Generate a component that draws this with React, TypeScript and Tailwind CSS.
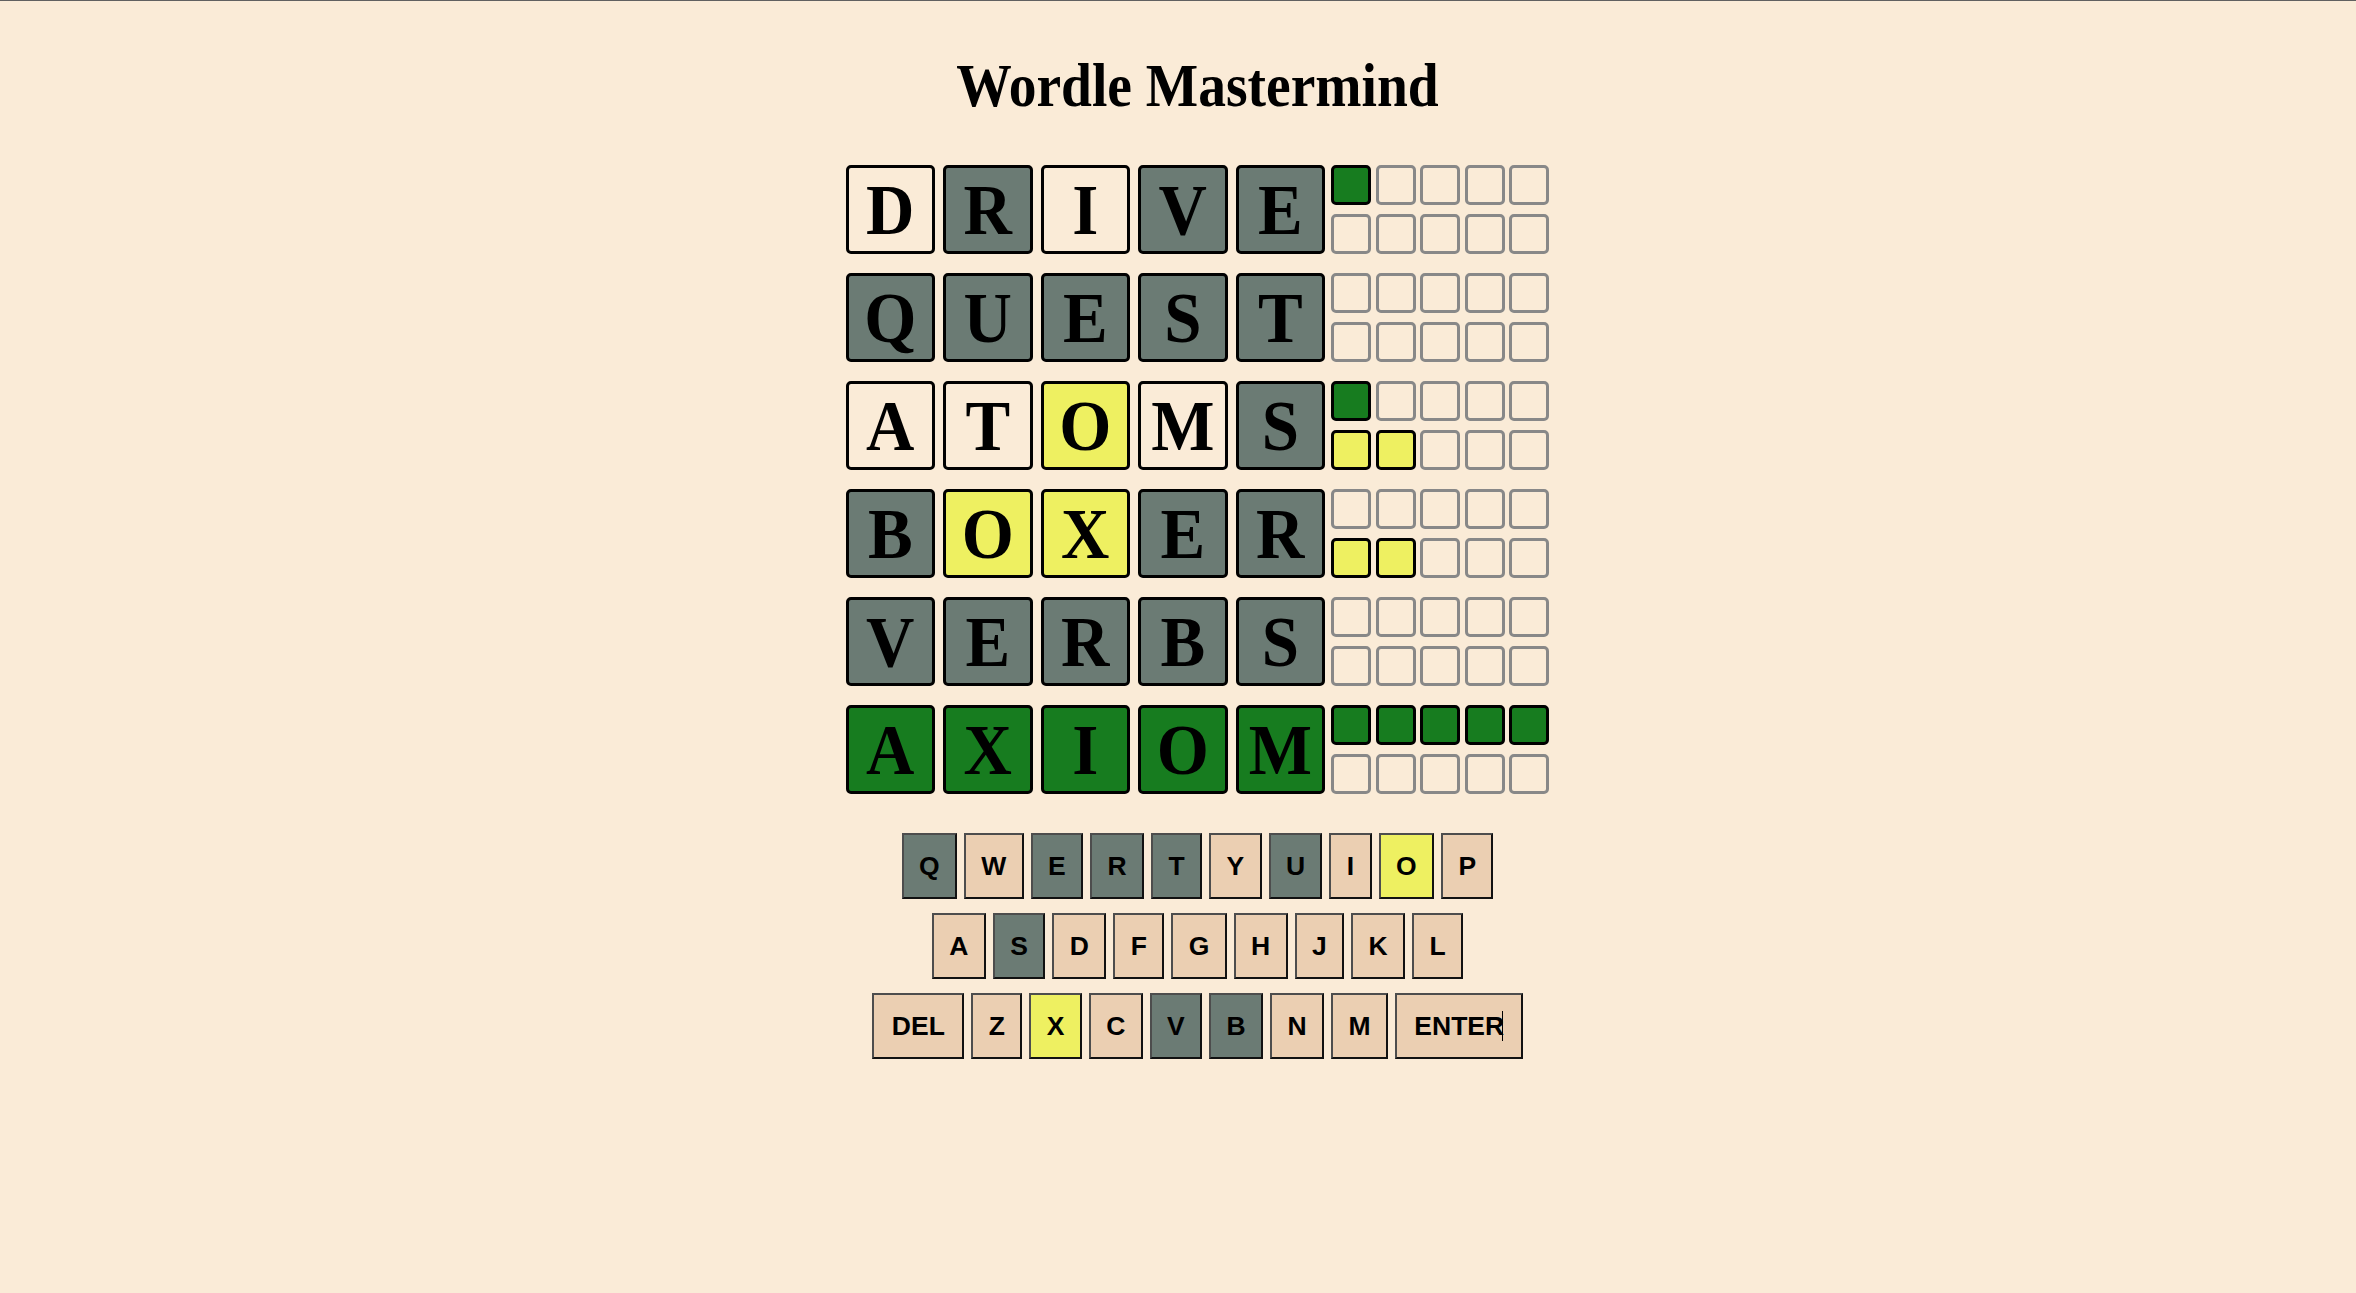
type Mark = 'e' | 'g' | 'y' | 'k';

const tileBg: Record<Mark, string> = {
  e: 'bg-transparent',
  g: 'bg-[#177c1f]',
  y: 'bg-[#eef061]',
  k: 'bg-[#6b7b74]',
};

const keyBg: Record<string, string> = {
  b: 'bg-[#ebcfb2]',
  g: 'bg-[#6b7b74]',
  y: 'bg-[#eef061]',
};

const guesses: { word: string; marks: Mark[]; exact: number; near: number }[] = [
  { word: 'DRIVE', marks: ['e', 'k', 'e', 'k', 'k'], exact: 1, near: 0 },
  { word: 'QUEST', marks: ['k', 'k', 'k', 'k', 'k'], exact: 0, near: 0 },
  { word: 'ATOMS', marks: ['e', 'e', 'y', 'e', 'k'], exact: 1, near: 2 },
  { word: 'BOXER', marks: ['k', 'y', 'y', 'k', 'k'], exact: 0, near: 2 },
  { word: 'VERBS', marks: ['k', 'k', 'k', 'k', 'k'], exact: 0, near: 0 },
  { word: 'AXIOM', marks: ['g', 'g', 'g', 'g', 'g'], exact: 5, near: 0 },
];

const keyRows: [string, string][][] = [
  [['Q', 'g'], ['W', 'b'], ['E', 'g'], ['R', 'g'], ['T', 'g'], ['Y', 'b'], ['U', 'g'], ['I', 'b'], ['O', 'y'], ['P', 'b']],
  [['A', 'b'], ['S', 'g'], ['D', 'b'], ['F', 'b'], ['G', 'b'], ['H', 'b'], ['J', 'b'], ['K', 'b'], ['L', 'b']],
  [['DEL', 'b'], ['Z', 'b'], ['X', 'y'], ['C', 'b'], ['V', 'g'], ['B', 'g'], ['N', 'b'], ['M', 'b'], ['ENTER', 'b']],
];

function Hint({ fill }: { fill?: 'g' | 'y' }) {
  const cls = fill === 'g'
    ? 'bg-[#177c1f] border-black'
    : fill === 'y'
      ? 'bg-[#eef061] border-black'
      : 'border-[#888888]';
  return <div className={`w-[40px] h-[40px] rounded-[5px] border-[3px] ${cls}`} />;
}

function GuessRow({ word, marks, exact, near }: (typeof guesses)[number]) {
  return (
    <div className="flex items-start">
      <div className="flex gap-[8px]">
        {word.split('').map((ch, i) => (
          <div
            key={i}
            className={`w-[89.5px] h-[89px] rounded-[5px] border-[3px] border-black flex items-center justify-center ${tileBg[marks[i]]}`}
          >
            <span className="block text-[67px] leading-none font-bold text-black scale-y-[1.075] font-['Liberation_Serif','Times_New_Roman',serif]">
              {ch}
            </span>
          </div>
        ))}
      </div>
      <div className="ml-[6px] grid grid-cols-5 gap-x-[4.6px] gap-y-[9px]">
        {[0, 1, 2, 3, 4].map((i) => (
          <Hint key={`a${i}`} fill={i < exact ? 'g' : undefined} />
        ))}
        {[0, 1, 2, 3, 4].map((i) => (
          <Hint key={`b${i}`} fill={i < near ? 'y' : undefined} />
        ))}
      </div>
    </div>
  );
}

export default function App() {
  return (
    <div className="min-h-screen w-full bg-[#faebd7] border-t border-[#606060] flex flex-col items-center pl-[39px] font-['Liberation_Sans',Arial,sans-serif]">
      <h1 className="mt-[57px] text-[55.5px] leading-none font-bold text-black scale-y-[1.09] font-['Liberation_Serif','Times_New_Roman',serif]">
        Wordle Mastermind
      </h1>

      <div className="mt-[51px] flex flex-col gap-[19.2px]">
        {guesses.map((g) => (
          <GuessRow key={g.word} {...g} />
        ))}
      </div>

      <div className="mt-[39px] flex flex-col items-center gap-[14px]">
        {keyRows.map((row, r) => (
          <div key={r} className="flex gap-[7px]">
            {row.map(([label, c]) => (
              <button
                key={label}
                className={`h-[66px] ${label.length > 1 ? 'px-[17.5px]' : 'px-[15.4px]'} border-2 border-t-[#4d4d4d] border-l-[#4d4d4d] border-r-[#111111] border-b-[#111111] flex items-center justify-center text-[26.5px] leading-none font-bold text-black ${keyBg[c]}`}
              >
                {label}
                {label === 'ENTER' && <span className="inline-block w-px h-[30px] bg-black -ml-[2px]" />}
              </button>
            ))}
          </div>
        ))}
      </div>
    </div>
  );
}
